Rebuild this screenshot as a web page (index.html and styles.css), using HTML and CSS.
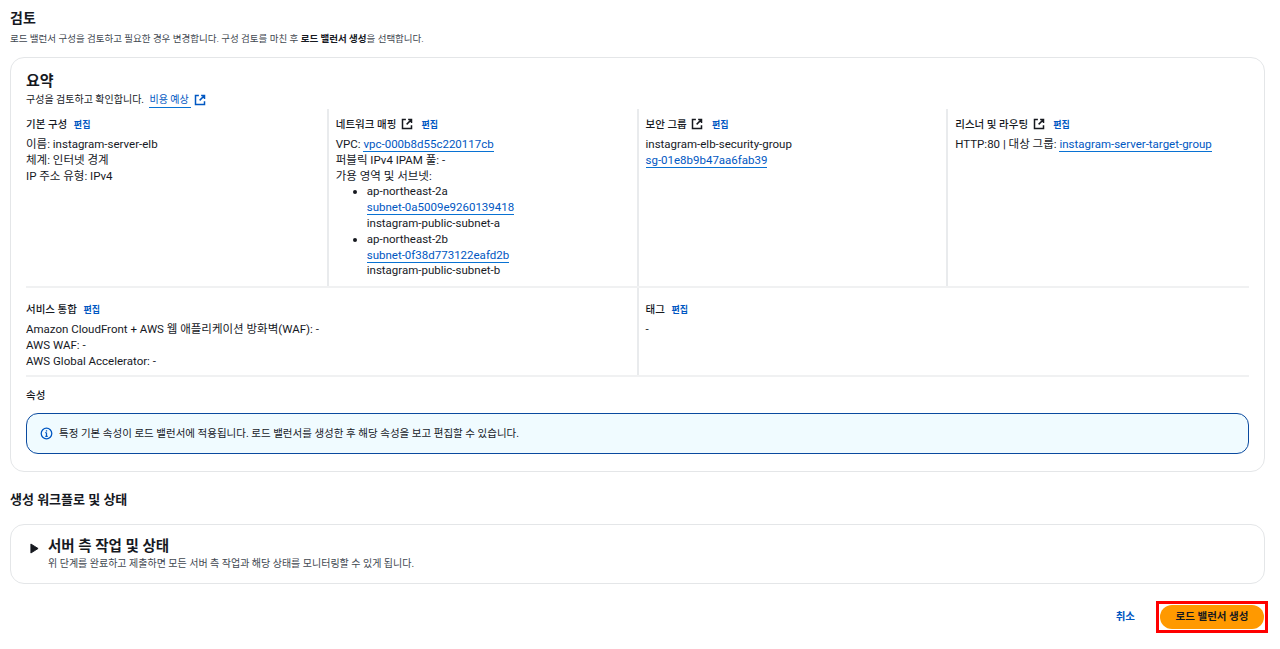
FILE: index.html
```html
<!DOCTYPE html>
<html lang="ko">
<head>
<meta charset="utf-8">
<title>검토</title>
<link rel="stylesheet" href="styles.css">
</head>
<body>
<svg class="defs" width="0" height="0" aria-hidden="true">
  <symbol id="ext" viewBox="0 0 16 16">
    <path d="M6.5 2H2v12h12V9.5M9.5 2H14v4.5M14 2 7.5 8.5" fill="none" stroke="currentColor" stroke-width="2"/>
  </symbol>
</svg>
<main class="page">
  <header class="head">
    <h1 class="title">검토</h1>
    <p class="desc">로드 밸런서 구성을 검토하고 필요한 경우 변경합니다. 구성 검토를 마친 후 <b>로드 밸런서 생성</b>을 선택합니다.</p>
  </header>
  <section class="card summary">
    <h2 class="card-title">요약</h2>
    <p class="card-desc">구성을 검토하고 확인합니다. <a class="link" href="#">비용 예상 </a><svg class="ext ext-blue"><use href="#ext"/></svg></p>
    <div class="grid top">
      <div class="cell">
        <h3 class="cell-head">기본 구성 <a class="edit" href="#">편집</a></h3>
        <div class="line">이름: instagram-server-elb</div>
        <div class="line">체계: 인터넷 경계</div>
        <div class="line">IP 주소 유형: IPv4</div>
      </div>
      <div class="cell">
        <h3 class="cell-head">네트워크 매핑 <svg class="ext"><use href="#ext"/></svg> <a class="edit" href="#">편집</a></h3>
        <div class="line">VPC: <a class="link" href="#">vpc-000b8d55c220117cb</a></div>
        <div class="line">퍼블릭 IPv4 IPAM 풀: -</div>
        <div class="line">가용 영역 및 서브넷:</div>
        <ul class="zones">
          <li><div class="line">ap-northeast-2a</div><div class="line"><a class="link" href="#">subnet-0a5009e9260139418</a></div><div class="line">instagram-public-subnet-a</div></li>
          <li><div class="line">ap-northeast-2b</div><div class="line"><a class="link" href="#">subnet-0f38d773122eafd2b</a></div><div class="line">instagram-public-subnet-b</div></li>
        </ul>
      </div>
      <div class="cell">
        <h3 class="cell-head">보안 그룹 <svg class="ext"><use href="#ext"/></svg> <a class="edit" href="#">편집</a></h3>
        <div class="line">instagram-elb-security-group</div>
        <div class="line"><a class="link" href="#">sg-01e8b9b47aa6fab39</a></div>
      </div>
      <div class="cell">
        <h3 class="cell-head">리스너 및 라우팅 <svg class="ext"><use href="#ext"/></svg> <a class="edit" href="#">편집</a></h3>
        <div class="line">HTTP:80 | 대상 그룹: <a class="link" href="#">instagram-server-target-group</a></div>
      </div>
    </div>
    <div class="grid bottom">
      <div class="cell wide">
        <h3 class="cell-head">서비스 통합 <a class="edit" href="#">편집</a></h3>
        <div class="line">Amazon CloudFront + AWS 웹 애플리케이션 방화벽(WAF): -</div>
        <div class="line">AWS WAF: -</div>
        <div class="line">AWS Global Accelerator: -</div>
      </div>
      <div class="cell wide">
        <h3 class="cell-head">태그 <a class="edit" href="#">편집</a></h3>
        <div class="line">-</div>
      </div>
    </div>
    <div class="attrs">
      <h3 class="cell-head">속성</h3>
      <div class="alert">
        <svg class="info" viewBox="0 0 16 16"><circle cx="8" cy="8" r="6.5" fill="none" stroke="currentColor" stroke-width="1.6"/><path d="M8 7v4.5M6.5 11.5h3M6.5 7H8" fill="none" stroke="currentColor" stroke-width="1.5"/><path d="M7.2 4h1.6v1.6H7.2z" fill="currentColor"/></svg>
        <span>특정 기본 속성이 로드 밸런서에 적용됩니다. 로드 밸런서를 생성한 후 해당 속성을 보고 편집할 수 있습니다.</span>
      </div>
    </div>
  </section>
  <h2 class="section-title">생성 워크플로 및 상태</h2>
  <section class="card status">
    <svg class="caret" viewBox="0 0 10 12"><path d="M1 1l8 5-8 5z" fill="currentColor" stroke="currentColor" stroke-linejoin="round"/></svg>
    <div>
      <h2 class="status-title">서버 측 작업 및 상태</h2>
      <p class="status-desc">위 단계를 완료하고 제출하면 모든 서버 측 작업과 해당 상태를 모니터링할 수 있게 됩니다.</p>
    </div>
  </section>
  <footer class="actions">
    <a class="cancel" href="#">취소</a>
    <div class="highlight"><button class="primary" type="button">로드 밸런서 생성</button></div>
  </footer>
</main>
</body>
</html>
```
FILE: styles.css
```css
* { box-sizing: border-box; }
html, body { margin: 0; background: #fff; }
body {
  font-family: Roboto, "Noto Sans CJK KR", "Liberation Sans", sans-serif;
  font-size: 11.5px;
  line-height: 16px;
  color: #16191f;
  height: 649px;
  overflow: hidden;
}
.defs { position: absolute; }
.page { padding: 9px 15px 0 10px; }
.title { margin: 0; font-size: 14px; line-height: 18px; font-weight: 700; }
.desc { margin: 5px 0 0; font-size: 9.5px; line-height: 14px; color: #414750; }
.desc b { font-weight: 700; color: #16191f; }
.card { border: 1px solid #e4e6e8; border-radius: 14px; background: #fff; }
.summary { margin-top: 11px; height: 415px; padding: 14px 15px 0; }
.card-title { margin: 0; font-size: 15px; line-height: 18px; font-weight: 700; }
.card-desc { margin: 2px 0 0; font-size: 10px; line-height: 16px; display: flex; align-items: center; gap: 3px; white-space: pre-wrap; }
.link { color: #0057c2; text-decoration: none; border-bottom: 1px solid #0972d3; }
.card-desc .link { line-height: 14px; }
.ext { width: 12px; height: 12px; display: inline-block; vertical-align: -2px; margin: 0 2px; color: #16191f; }
.ext-blue { color: #0057c2; margin: 0; }
.grid { display: grid; grid-template-columns: repeat(4, 1fr); column-gap: 16px; }
.top { height: 179px; margin-top: 1px; padding-top: 8px; border-bottom: 2px solid #f0f1f2; }
.bottom { height: 89px; padding-top: 14px; border-bottom: 2px solid #f0f1f2; }
.cell { position: relative; }
.cell + .cell::before { content: ""; position: absolute; left: -9px; top: -8px; bottom: 0; width: 2px; background: #e9ebed; }
.top .cell:nth-child(n) { min-height: 100%; }
.bottom .cell + .cell::before { top: -14px; }
.wide { grid-column: span 2; }
.cell-head { margin: 0 0 3px; font-size: 10.5px; line-height: 16px; font-weight: 500; }
.edit { margin-left: 4px; font-size: 9px; color: #0057c2; font-weight: 700; text-decoration: none; }
.line { height: 15.8px; white-space: nowrap; }
.zones { margin: 0; padding: 0 0 0 31px; }
.zones li { margin: 0; }
.attrs { padding-top: 11px; }
.alert { margin-top: 9px; height: 41px; border: 1.5px solid #0a4a9f; border-radius: 12px; background: #f0fbff; display: flex; align-items: center; gap: 6px; padding-left: 13px; font-size: 10.5px; }
.info { width: 13px; height: 13px; color: #0057c2; flex: none; }
.section-title { margin: 19px 0 0; font-size: 13px; line-height: 18px; font-weight: 700; }
.status { margin-top: 15px; height: 60px; display: flex; align-items: flex-start; gap: 9px; padding: 13px 20px 0 19px; }
.caret { width: 9px; height: 11px; margin-top: 5px; flex: none; }
.status-title { margin: 0; font-size: 14.5px; line-height: 18px; font-weight: 700; }
.status-desc { margin: 1px 0 0; font-size: 10px; line-height: 14px; color: #414750; }
.actions { margin-top: 17px; display: flex; justify-content: flex-end; align-items: center; gap: 21px; margin-right: -3px; }
.cancel { color: #0057c2; font-size: 10.5px; font-weight: 700; text-decoration: none; }
.highlight { border: 3px solid #f00; background: #fff; padding: 1px; width: 112px; height: 32px; }
.primary { display: block; width: 100%; height: 100%; border: 0; padding: 0; border-radius: 13px; background: #ff9900; color: #16191f; font: 700 10.5px/16px Roboto, "Noto Sans CJK KR", sans-serif; }
```
